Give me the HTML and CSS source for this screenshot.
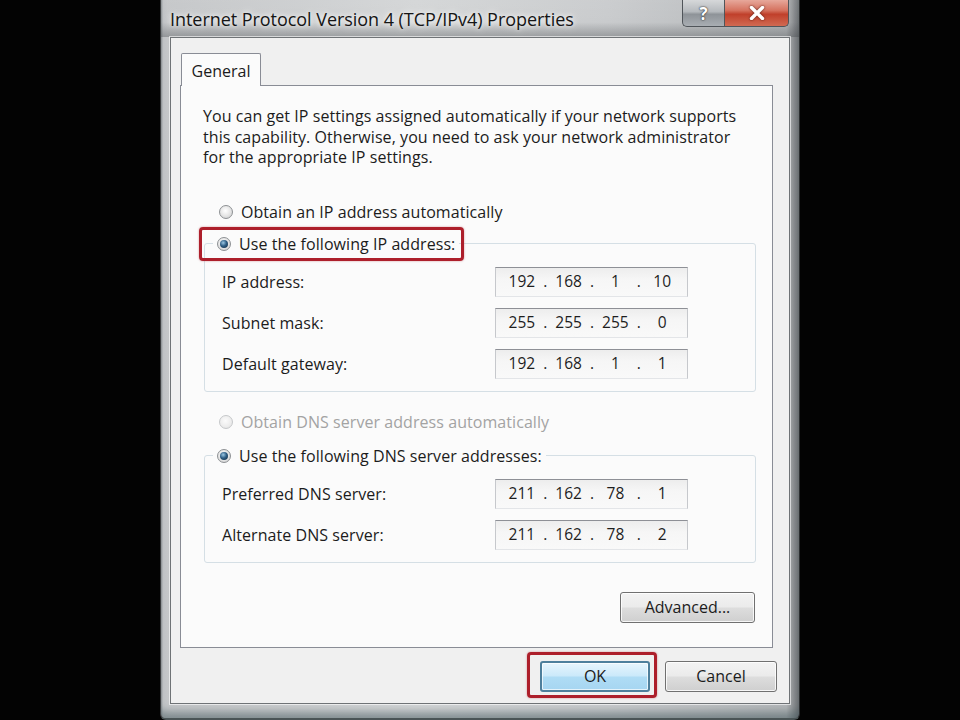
FILE: index.html
```html
<!DOCTYPE html>
<html>
<head>
<meta charset="utf-8">
<title>Internet Protocol Version 4 (TCP/IPv4) Properties</title>
<link rel="stylesheet" href="styles.css">
</head>
<body>
<div class="window">
  <div class="titlebar">
    <div class="title">Internet Protocol Version 4 (TCP/IPv4) Properties</div>
    <div class="caption-btns">
      <div class="cbtn help">?</div>
      <div class="cbtn close">
        <svg width="16" height="14" viewBox="0 0 16 14"><path d="M2.5 1.5 L13.5 12.5 M13.5 1.5 L2.5 12.5" stroke="#fff" stroke-width="3.4" stroke-linecap="round"/></svg>
      </div>
    </div>
  </div>
  <div class="client">
    <div class="tabs"><div class="tab">General</div></div>
    <div class="panel">
      <p class="desc">You can get IP settings assigned automatically if your network supports<br>this capability. Otherwise, you need to ask your network administrator<br>for the appropriate IP settings.</p>

      <div class="radio-row ip-auto"><span class="radio"></span><span>Obtain an IP address automatically</span></div>

      <fieldset class="group">
        <legend class="legend"><span class="radio checked"></span><span>Use the following IP address:</span><span class="mark mark-ip"></span></legend>
        <div class="field"><span class="label">IP address:</span>
          <div class="ipbox"><span class="seg">192</span><span class="dot">.</span><span class="seg">168</span><span class="dot">.</span><span class="seg">1</span><span class="dot">.</span><span class="seg">10</span></div></div>
        <div class="field"><span class="label">Subnet mask:</span>
          <div class="ipbox"><span class="seg">255</span><span class="dot">.</span><span class="seg">255</span><span class="dot">.</span><span class="seg">255</span><span class="dot">.</span><span class="seg">0</span></div></div>
        <div class="field"><span class="label">Default gateway:</span>
          <div class="ipbox"><span class="seg">192</span><span class="dot">.</span><span class="seg">168</span><span class="dot">.</span><span class="seg">1</span><span class="dot">.</span><span class="seg">1</span></div></div>
      </fieldset>

      <div class="radio-row disabled dns-auto"><span class="radio"></span><span>Obtain DNS server address automatically</span></div>

      <fieldset class="group group-dns">
        <legend class="legend"><span class="radio checked"></span><span>Use the following DNS server addresses:</span></legend>
        <div class="field"><span class="label">Preferred DNS server:</span>
          <div class="ipbox"><span class="seg">211</span><span class="dot">.</span><span class="seg">162</span><span class="dot">.</span><span class="seg">78</span><span class="dot">.</span><span class="seg">1</span></div></div>
        <div class="field"><span class="label">Alternate DNS server:</span>
          <div class="ipbox"><span class="seg">211</span><span class="dot">.</span><span class="seg">162</span><span class="dot">.</span><span class="seg">78</span><span class="dot">.</span><span class="seg">2</span></div></div>
      </fieldset>

      <div class="adv-row"><button class="btn adv">Advanced...</button></div>
    </div>
    <div class="footer">
      <div class="ok-wrap"><button class="btn ok">OK</button><span class="mark mark-ok"></span></div>
      <button class="btn cancel">Cancel</button>
    </div>
  </div>
</div>
</body>
</html>
```

FILE: styles.css
```css
* { box-sizing: border-box; }
html, body { margin: 0; padding: 0; }
body {
  width: 960px;
  height: 720px;
  background: #030303;
  overflow: hidden;
  font-family: "Open Sans", "Noto Sans", sans-serif;
  color: #1c1c1c;
}
.window {
  width: 640px;
  height: 720px;
  margin-left: 160px;
  display: flex;
  flex-direction: column;
  padding: 0 9px 14px 9px;
  background: linear-gradient(to right, #8e9194 0, #c4c6c8 2px, #d3d5d6 40%, #c9cbcd 70%, #b4b7b9 98%, #6d7073 100%);
  border-left: 1px solid #3a3c3e;
  border-right: 1px solid #2c2f31;
  border-bottom: 2px solid #4a5456;
  border-radius: 0 0 6px 6px;
  box-shadow: inset 0 -10px 8px -4px rgba(70, 90, 95, 0.55);
}
.titlebar {
  height: 37px;
  margin: 0 -9px 0 -9px;
  padding: 0 9px 0 9px;
  display: flex;
  align-items: flex-start;
  justify-content: space-between;
  background: linear-gradient(to bottom, rgba(255,255,255,0.05) 0, rgba(255,255,255,0) 60%, rgba(60,64,68,0.35) 100%);
}
.title {
  margin-top: 7px;
  font-size: 18px;
  letter-spacing: -0.05px;
  color: #151515;
  text-shadow: 0 0 8px rgba(255,255,255,0.9), 0 0 4px rgba(255,255,255,0.8);
  white-space: nowrap;
}
.caption-btns {
  display: flex;
  margin-right: 1px;
}
.cbtn {
  height: 27px;
  display: flex;
  align-items: center;
  justify-content: center;
  border: 1px solid #50555a;
  border-top: none;
}
.help {
  width: 42px;
  border-radius: 0 0 0 5px;
  background: linear-gradient(#d6d8da 0, #b5b9bd 45%, #8e9398 55%, #a9aeb3 100%);
  color: #fff;
  font-weight: 700;
  font-size: 17px;
  text-shadow: 0 0 2px #333, 0 0 1px #222;
  border-right: none;
}
.close {
  width: 65px;
  border-radius: 0 0 5px 0;
  background: linear-gradient(#e7a89b 0, #d5725f 40%, #c0402b 55%, #d16a52 100%);
}
.close svg { filter: drop-shadow(0 0 1px #5a1a10); }
.client {
  flex: 1;
  background: #f0f0f0;
  border: 1px solid #6f7376;
  box-shadow: 0 0 0 1px rgba(255,255,255,0.6);
  padding: 15px 12px 0 9px;
  display: flex;
  flex-direction: column;
}
.tabs {
  display: flex;
  padding-left: 1px;
  height: 33px;
  position: relative;
  z-index: 1;
}
.tab {
  width: 80px;
  height: 33px;
  background: #fbfbfb;
  border: 1px solid #898c95;
  border-bottom: none;
  border-radius: 2px 2px 0 0;
  font-size: 16px;
  display: flex;
  align-items: center;
  justify-content: center;
  padding-top: 1px;
}
.panel {
  margin-top: -1px;
  margin-right: 4px;
  background: #fbfbfb;
  border: 1px solid #898c95;
  padding: 20px 16px 24px 22px;
  font-size: 16px;
  letter-spacing: 0.06px;
}
.desc {
  margin: 0;
  line-height: 20.5px;
}
.radio-row {
  display: flex;
  align-items: center;
  height: 20px;
  padding-left: 16px;
}
.ip-auto { margin-top: 34px; }
.radio-row.disabled { color: #a3a3a3; }
.radio {
  width: 14px;
  height: 14px;
  border-radius: 50%;
  border: 1px solid #8d9093;
  background: radial-gradient(circle at 45% 40%, #ffffff 0, #e9e9e9 45%, #c9cacb 100%);
  margin-right: 8px;
  flex: none;
  position: relative;
}
.radio.checked::after {
  content: "";
  position: absolute;
  left: 2px; top: 2px;
  width: 8px; height: 8px;
  border-radius: 50%;
  background: radial-gradient(circle at 40% 35%, #9cc8e4 0, #2f5f86 45%, #10263a 100%);
}
.disabled .radio {
  border-color: #c6c8ca;
  background: radial-gradient(circle at 45% 40%, #fbfbfb 0, #ececec 60%, #dcdcdc 100%);
}
.group {
  margin: 12px 0 0 1px;
  border: 1px solid #d5dfe5;
  border-radius: 3px;
  padding: 13px 0 12px 17px;
  min-width: 0;
}
.legend {
  display: flex;
  align-items: center;
  height: 20px;
  padding: 0 4px;
  margin-left: -9px;
  position: relative;
}
.field {
  display: flex;
  align-items: center;
  height: 30px;
}
.field + .field { margin-top: 11px; }
.label {
  width: 273px;
  flex: none;
}
.ipbox {
  width: 193px;
  height: 30px;
  border: 1px solid #c6c8cc;
  border-top-color: #8e9096;
  border-bottom-color: #e3e5e8;
  background: linear-gradient(#ededed, #f6f6f6 40%, #f9f9f9);
  display: flex;
  align-items: center;
  padding: 0 5px 1px 6px;
  font-size: 15.5px;
  letter-spacing: 0;
  color: #1e1e1e;
}
.seg { width: 40px; text-align: center; }
.dot { width: 7px; text-align: center; }
.dns-auto { margin-top: 20px; }
.group-dns { margin-top: 14px; }
.adv-row {
  display: flex;
  justify-content: flex-end;
  margin-top: 29px;
  padding-right: 1px;
}
.btn {
  font-family: "Open Sans", "Noto Sans", sans-serif;
  font-size: 16px;
  color: #1c1c1c;
  height: 31px;
  border: 1px solid #707070;
  border-radius: 3px;
  background: linear-gradient(#f3f3f3 0, #ebebeb 48%, #dddddd 52%, #cfcfcf 100%);
  box-shadow: inset 0 0 0 1px rgba(255,255,255,0.8);
  padding: 0;
}
.adv { width: 135px; }
.footer {
  display: flex;
  justify-content: flex-end;
  align-items: flex-start;
  gap: 15px;
  padding-top: 13px;
}
.ok-wrap { position: relative; display: flex; }
.ok {
  width: 110px;
  border: 2px solid #4e7f9c;
  background: linear-gradient(#e7f5fd 0, #cbe9fa 48%, #afdcf5 52%, #a6d6f1 100%);
  box-shadow: inset 0 0 0 1px rgba(255,255,255,0.7);
}
.cancel { width: 112px; }
.mark {
  position: absolute;
  border: 3px solid #ad1f2b;
  border-radius: 4px;
  box-shadow: 0 0 2px rgba(173, 31, 43, 0.5);
  pointer-events: none;
}
.mark-ip {
  left: -14px;
  right: -5px;
  top: -7px;
  bottom: -7px;
}
.mark-ok {
  left: -13px;
  top: -9px;
  width: 130px;
  height: 46px;
}
```
